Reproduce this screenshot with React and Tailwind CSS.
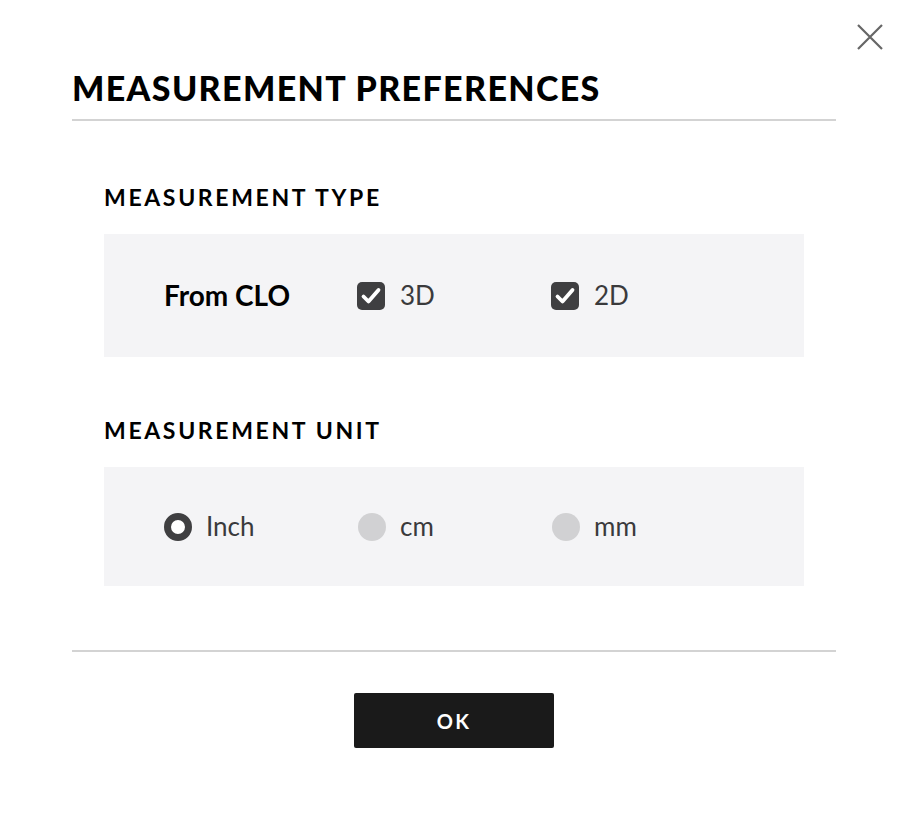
import React, { useState } from 'react'

const font = { fontFamily: 'Lato, "Noto Sans", sans-serif' }

function Checkbox({ checked, onChange, label }) {
  return (
    <button type="button" onClick={onChange} className="flex items-center gap-[15px] w-[194px]">
      <span
        className={`w-[28px] h-[28px] rounded-[5px] flex items-center justify-center ${
          checked ? 'bg-[#3f3f41]' : 'bg-[#d1d1d3]'
        }`}
      >
        {checked && (
          <svg width="24" height="24" viewBox="0 0 24 24" fill="none">
            <path d="M4.5 12.5 L9.5 17.5 L19.5 6" stroke="#fff" strokeWidth="3.8" strokeLinecap="round" strokeLinejoin="round" />
          </svg>
        )}
      </span>
      <span className="text-[26px] text-[#3a3a3c] leading-none pb-[2px]">{label}</span>
    </button>
  )
}

function Radio({ checked, onChange, label }) {
  return (
    <button type="button" onClick={onChange} className="flex items-center gap-[14px] w-[194px]">
      <span
        className={`w-[28px] h-[28px] rounded-full ${
          checked ? 'border-[7px] border-[#3f3f41] bg-white' : 'bg-[#d1d1d3]'
        }`}
      />
      <span className="text-[26px] text-[#3a3a3c] leading-none pb-[2px]">{label}</span>
    </button>
  )
}

export default function App() {
  const [types, setTypes] = useState({ '3D': true, '2D': true })
  const [unit, setUnit] = useState('Inch')

  return (
    <div className="w-[910px] h-[816px] bg-white relative" style={font}>
      {/* close button */}
      <button type="button" className="absolute top-[23px] right-[26px] w-[28px] h-[28px] flex items-center justify-center">
        <svg width="28" height="28" viewBox="0 0 28 28" fill="none">
          <path d="M2 2 L26 26 M26 2 L2 26" stroke="#666" strokeWidth="2.2" />
        </svg>
      </button>

      <div className="ml-[72px] w-[764px] pt-[68px]">
        <h1 className="text-[34px] font-black tracking-[0.04em] text-black leading-[40px] pb-[11px] border-b-2 border-[#d3d3d3]">
          MEASUREMENT PREFERENCES
        </h1>

        <div className="px-[32px] pt-[62px] pb-[64px] border-b-2 border-[#d3d3d3]">
          <h2 className="text-[23px] font-bold tracking-[0.115em] text-black leading-[28px]">MEASUREMENT TYPE</h2>
          <div className="mt-[23px] h-[123px] bg-[#f4f4f6] flex items-center pl-[60px]">
            <span className="w-[193px] text-[28px] font-bold text-black leading-none pb-[2px]">From CLO</span>
            {['3D', '2D'].map((k) => (
              <Checkbox
                key={k}
                label={k}
                checked={types[k]}
                onChange={() => setTypes({ ...types, [k]: !types[k] })}
              />
            ))}
          </div>

          <h2 className="mt-[59px] text-[23px] font-bold tracking-[0.115em] text-black leading-[28px]">MEASUREMENT UNIT</h2>
          <div className="mt-[23px] h-[119px] bg-[#f4f4f6] flex items-center pl-[60px]">
            {['Inch', 'cm', 'mm'].map((u) => (
              <Radio key={u} label={u} checked={unit === u} onChange={() => setUnit(u)} />
            ))}
          </div>
        </div>

        <div className="flex justify-center pt-[41px]">
          <button
            type="button"
            className="w-[200px] h-[55px] bg-[#1a1a1a] rounded-[2px] text-white text-[20px] font-bold tracking-[0.12em]"
          >
            OK
          </button>
        </div>
      </div>
    </div>
  )
}
